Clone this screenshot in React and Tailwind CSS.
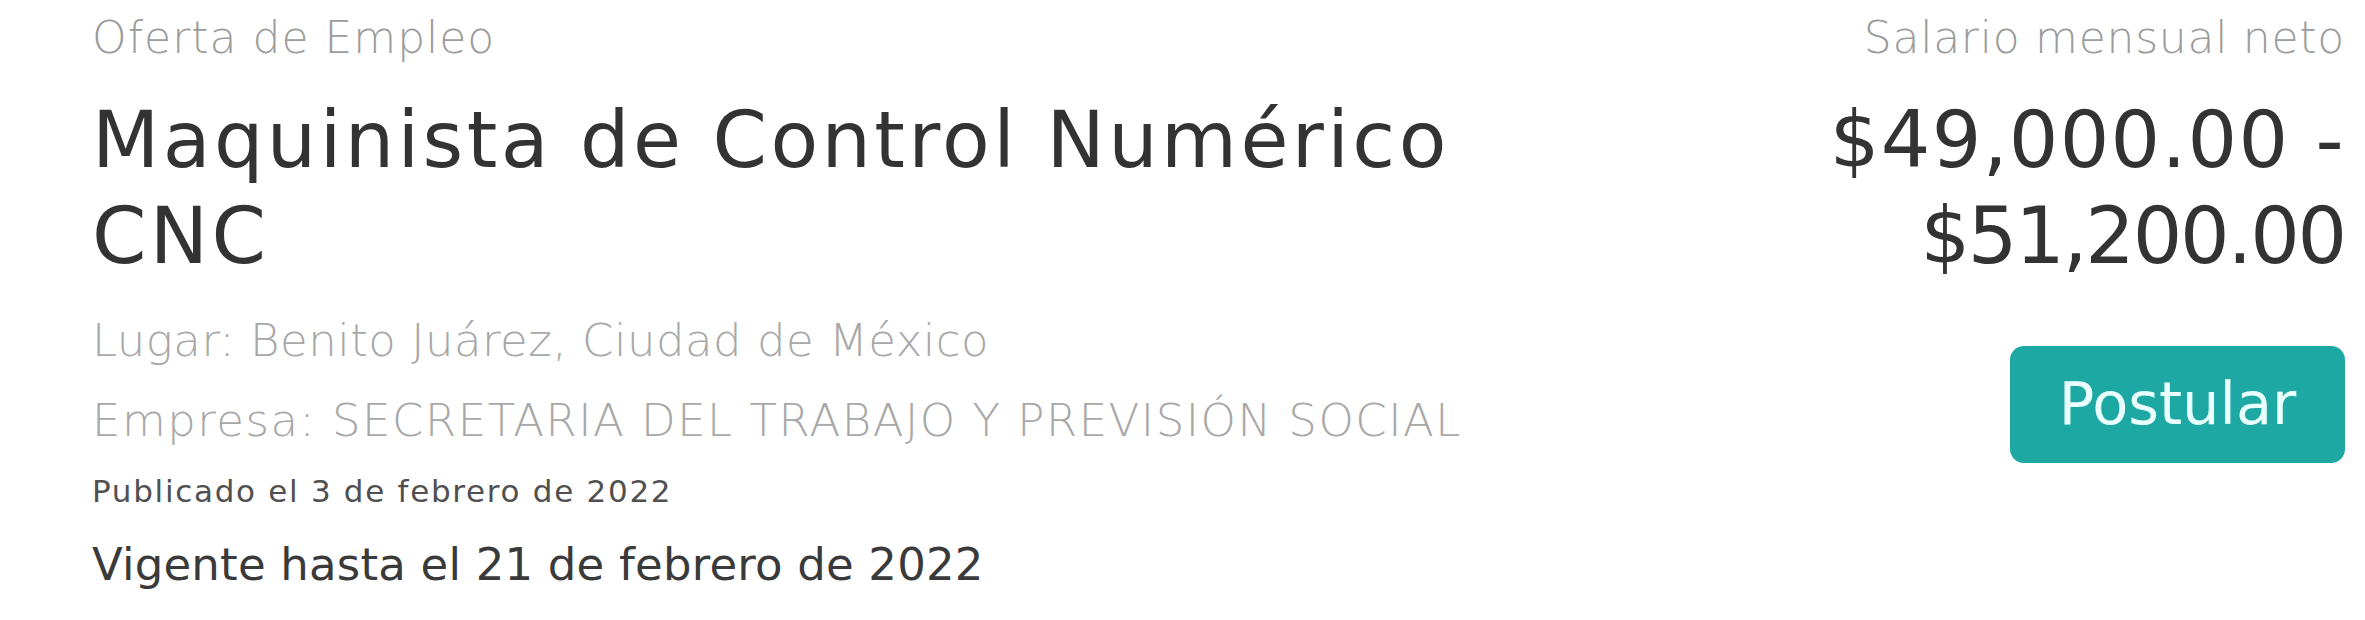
const light = "font-['DejaVu_Sans_ExtraLight','DejaVu_Sans',sans-serif] font-extralight";

export default function App() {
  return (
    <div className="flex justify-between bg-white pl-[92px] pr-[20px] pt-[8px] font-['DejaVu_Sans',sans-serif] min-h-[620px]">
      <div className="w-[1480px]">
        <p className={`${light} text-[44px] leading-[60px] tracking-[1px] text-[#9c9c9c]`}>Oferta de Empleo</p>
        <h1 className="mt-[24px] text-[78px] leading-[96px] tracking-[3.4px] text-[#333333]">
          Maquinista de Control Numérico CNC
        </h1>
        <p className={`${light} mt-[17px] text-[45px] leading-[80px] tracking-[0.5px] text-[#a8a8a8]`}>
          Lugar: Benito Juárez, Ciudad de México
        </p>
        <p className={`${light} text-[45px] leading-[80px] tracking-[1.5px] text-[#a8a8a8]`}>
          Empresa: SECRETARIA DEL TRABAJO Y PREVISIÓN SOCIAL
        </p>
        <p className="mt-[10px] text-[31px] leading-[40px] tracking-[1.7px] text-[#505050]">
          Publicado el 3 de febrero de 2022
        </p>
        <p className="mt-[24px] text-[45px] leading-[60px] tracking-[0.2px] text-[#3a3a3a]">
          Vigente hasta el 21 de febrero de 2022
        </p>
      </div>
      <div className="flex flex-col items-end text-right">
        <p className={`${light} text-[44px] leading-[60px] tracking-[0.75px] text-[#9c9c9c]`}>Salario mensual neto</p>
        <div className="mt-[24px] text-[78px] leading-[96px] text-[#333333]">
          <div className="tracking-[1.3px]">$49,000.00 -</div>
          <div className="tracking-[-2.2px]">$51,200.00</div>
        </div>
        <button className="mt-[62px] h-[117px] w-[335px] rounded-[14px] bg-[#1ea8a3] text-[59px] text-[#e8fffd]">
          Postular
        </button>
      </div>
    </div>
  );
}
